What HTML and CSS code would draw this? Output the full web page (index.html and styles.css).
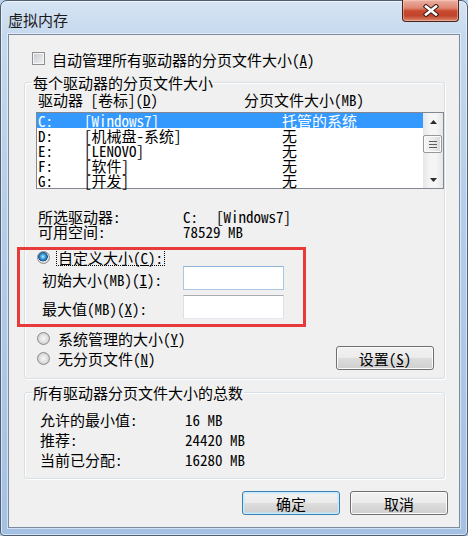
FILE: index.html
```html
<!DOCTYPE html>
<html lang="zh-CN">
<head>
  <meta charset="UTF-8">
  <meta name="viewport" content="width=device-width, initial-scale=1.0">
  <title>虚拟内存</title>
  <link rel="stylesheet" href="styles.css">
</head>
<body>
  <div class="window">
    <div class="titlebar">
      <span class="title">虚拟内存</span>
      <button class="close" aria-label="关闭">
        <svg width="16" height="13" viewBox="0 0 16 13">
          <path d="M3 2.5 L13 10.5 M13 2.5 L3 10.5" stroke="#3a1d18" stroke-width="4.6" stroke-linecap="square"/>
          <path d="M3 2.5 L13 10.5 M13 2.5 L3 10.5" stroke="#ffffff" stroke-width="2.6" stroke-linecap="square"/>
        </svg>
      </button>
    </div>

    <div class="client">
      <div class="auto-row"><span class="check"></span><span>自动管理所有驱动器的分页文件大小(<u>A</u>)</span></div>

      <fieldset class="group drives">
        <legend>每个驱动器的分页文件大小</legend>
        <div class="list-head"><span>驱动器 [卷标](<u>D</u>)</span><span>分页文件大小(MB)</span></div>
        <div class="listbox">
          <ul class="rows">
            <li class="selected"><span>C:</span><span>[Windows7]</span><span>托管的系统</span></li>
            <li><span>D:</span><span>[机械盘-系统]</span><span>无</span></li>
            <li><span>E:</span><span>[LENOVO]</span><span>无</span></li>
            <li><span>F:</span><span>[软件]</span><span>无</span></li>
            <li><span>G:</span><span>[开发]</span><span>无</span></li>
          </ul>
          <div class="scrollbar">
            <div class="sb-btn">
              <svg width="7" height="4" viewBox="0 0 7 4"><polygon points="3.5,0 7,4 0,4" fill="#2b2b2b"/></svg>
            </div>
            <div class="thumb">
              <svg width="8" height="7" viewBox="0 0 8 7">
                <path d="M0 0.5 H8 M0 3.5 H8 M0 6.5 H8" stroke="#5f5f5f" stroke-width="1"/>
              </svg>
            </div>
            <div class="track"></div>
            <div class="sb-btn">
              <svg width="7" height="4" viewBox="0 0 7 4"><polygon points="0,0 7,0 3.5,4" fill="#2b2b2b"/></svg>
            </div>
          </div>
        </div>

        <div class="info">
          <div class="info-row"><span>所选驱动器:</span><span>C:<span class="vol">[Windows7]</span></span></div>
          <div class="info-row"><span>可用空间:</span><span>78529 MB</span></div>
        </div>

        <div class="radio-row custom"><span class="radio on"></span><span class="focus">自定义大小(<u>C</u>):</span></div>
        <div class="field-row"><span class="field-label">初始大小(MB)(<u>I</u>):</span><span class="input hot"></span></div>
        <div class="field-row second"><span class="field-label">最大值(MB)(<u>X</u>):</span><span class="input"></span></div>

        <div class="bottom-row">
          <div class="radios">
            <div class="radio-row"><span class="radio"></span><span>系统管理的大小(<u>Y</u>)</span></div>
            <div class="radio-row"><span class="radio"></span><span>无分页文件(<u>N</u>)</span></div>
          </div>
          <button class="btn set">设置(<u>S</u>)</button>
        </div>
      </fieldset>

      <fieldset class="group totals">
        <legend>所有驱动器分页文件大小的总数</legend>
        <div class="total-row"><span>允许的最小值:</span><span>16 MB</span></div>
        <div class="total-row"><span>推荐:</span><span>24420 MB</span></div>
        <div class="total-row"><span>当前已分配:</span><span>16280 MB</span></div>
      </fieldset>

      <div class="actions">
        <button class="btn default">确定</button>
        <button class="btn">取消</button>
      </div>

      <div class="mark"></div>
    </div>
  </div>
</body>
</html>
```

FILE: styles.css
```css
* {
  box-sizing: border-box;
}

body {
  margin: 0;
  font-family: "Noto Sans Mono CJK SC", "Noto Sans CJK SC", "Noto Sans", sans-serif;
  font-size: 15px;
  line-height: 15px;
  color: #000;
  background: #b9d0ea;
  overflow: hidden;
}

u {
  text-underline-offset: 1px;
}

.window {
  width: 468px;
  height: 536px;
  padding: 0 7px 7px;
  border: 1px solid #4f5e70;
  border-radius: 7px 7px 4px 4px;
  background: linear-gradient(180deg, #d6e4f3 0, #c5d9ee 34px, #b4cde9 220px, #a4c1e4 100%);
  box-shadow: inset 0 0 0 1px rgba(255, 255, 255, 0.55);
}

.titlebar {
  height: 33px;
  display: flex;
  align-items: flex-start;
}

.title {
  margin-top: 11px;
  font-family: "Noto Sans CJK SC", sans-serif;
  color: #1a1a1a;
}

.close {
  margin: -1px 1px 0 auto;
  width: 57px;
  height: 22px;
  padding: 0;
  display: flex;
  align-items: center;
  justify-content: center;
  border: 1px solid #4a2219;
  border-top: none;
  border-radius: 0 0 4px 4px;
  background: linear-gradient(180deg, #eab1a3 0%, #de8672 38%, #c8492f 52%, #c1442c 75%, #d98a6e 100%);
  box-shadow: inset 0 0 0 1px rgba(255, 215, 200, 0.45);
}

.client {
  position: relative;
  height: 494px;
  border: 1px solid #7b8a9c;
  background: #f0f0f0;
  box-shadow: 0 0 0 1px rgba(255, 255, 255, 0.5);
}

.auto-row {
  display: flex;
  gap: 7px;
  margin: 17px 0 0 23px;
}

.check {
  flex: none;
  width: 13px;
  height: 13px;
  border: 1px solid #8e8f8f;
  background: linear-gradient(135deg, #c3c8ce, #f3f3f4);
  box-shadow: inset 0 0 0 1px #f6f6f6;
}

.group {
  margin: 8px 0 0 15px;
  width: 421px;
  min-inline-size: 0;
  border: 1px solid #d5dfe5;
  border-radius: 3px;
  box-shadow: inset 1px 1px 0 #fff, 1px 1px 0 #fff;
}

.group legend {
  padding: 0 1px;
  line-height: 15px;
}

.drives {
  padding: 2px 0 8px 11px;
}

.drives legend {
  margin-left: -4px;
}

.list-head {
  display: grid;
  grid-template-columns: 206px auto;
  padding-left: 2px;
}

.listbox {
  display: flex;
  margin-top: 5px;
  height: 77px;
  border: 1px solid #828790;
  background: #fff;
}

.rows {
  flex: 1;
  list-style: none;
  margin: 0;
  padding: 0;
}

.rows li {
  display: grid;
  grid-template-columns: 46px 198px 1fr;
  height: 15px;
  padding-left: 1px;
  white-space: nowrap;
}

.rows li.selected {
  background: #3399ff;
  color: #fff;
}

.scrollbar {
  width: 20px;
  display: flex;
  flex-direction: column;
  background: linear-gradient(90deg, #e6e6e6, #f5f5f5 35%, #f5f5f5 65%, #e6e6e6);
}

.sb-btn {
  height: 17px;
  display: flex;
  align-items: center;
  justify-content: center;
}

.thumb {
  height: 18px;
  margin: 5px 1px 0 0;
  display: flex;
  align-items: center;
  justify-content: center;
  border: 1px solid #979797;
  border-radius: 2px;
  background: linear-gradient(90deg, #f6f6f6, #ebebeb 50%, #d8d8d8);
  box-shadow: inset 0 0 0 1px #fbfbfb;
}

.track {
  flex: 1;
}

.info {
  margin-top: 20px;
  padding-left: 2px;
}

.info-row {
  display: grid;
  grid-template-columns: 145px auto;
}

.vol {
  margin-left: 18px;
}

.radio-row {
  display: flex;
  align-items: center;
  gap: 8px;
  height: 15px;
  margin-left: 1px;
}

.radio {
  flex: none;
  width: 13px;
  height: 13px;
  border: 1px solid #8b8b8b;
  border-radius: 50%;
  background: radial-gradient(circle, #f7f7f7 0, #e3e3e3 45%, #cdcdcd 75%, #ececec 100%);
}

.radio.on {
  background: radial-gradient(circle at 45% 42%, #b4ebfd 0, #3f9bd9 28%, #175892 52%, #e6e6e6 58%, #d2d2d2 85%);
}

.custom {
  margin-top: 11px;
  gap: 6px;
}

.focus {
  margin: -1px 0;
  padding: 0 1px;
  border: 1px dotted #000;
}

.field-row {
  display: flex;
  align-items: center;
  height: 24px;
  margin-top: 1px;
  padding-left: 6px;
}

.field-row.second {
  margin-top: 5px;
}

.field-label {
  width: 141px;
  padding-top: 3px;
}

.input {
  width: 101px;
  height: 24px;
  background: #fff;
  border: 1px solid #dbdfe6;
  border-top-color: #abadb3;
  border-bottom-color: #e3e9ef;
}

.input.hot {
  border-color: #aac6e2;
  border-top-color: #8fb4d8;
}

.bottom-row {
  display: flex;
  align-items: flex-start;
  justify-content: space-between;
  margin-top: 12px;
}

.radios {
  display: flex;
  flex-direction: column;
  gap: 5px;
}

.btn {
  width: 98px;
  height: 24px;
  padding: 0;
  font: inherit;
  line-height: 15px;
  color: #000;
  border: 1px solid #707070;
  border-radius: 3px;
  background: linear-gradient(180deg, #f2f2f2 0%, #ebebeb 50%, #dddddd 50%, #cfcfcf 100%);
  box-shadow: inset 0 0 0 1px #fbfbfb;
}

.btn.set {
  margin: 15px 10px 0 0;
}

.btn.default {
  border-color: #3c7fb1;
  box-shadow: inset 0 0 0 1px #c6ecfd, inset 0 0 0 2px rgba(190, 230, 253, 0.5);
}

.totals {
  margin-top: 6px;
  padding: 10px 0 8px 15px;
}

.totals legend {
  margin-left: -8px;
}

.total-row {
  display: grid;
  grid-template-columns: 145px auto;
  line-height: 20px;
}

.actions {
  display: flex;
  justify-content: flex-end;
  gap: 10px;
  margin: 12px 11px 0 0;
}

/* red annotation box drawn over the custom size controls */
.mark {
  position: absolute;
  left: 8px;
  top: 212px;
  width: 289px;
  height: 80px;
  border: 3px solid #e83a3a;
  pointer-events: none;
}
```
